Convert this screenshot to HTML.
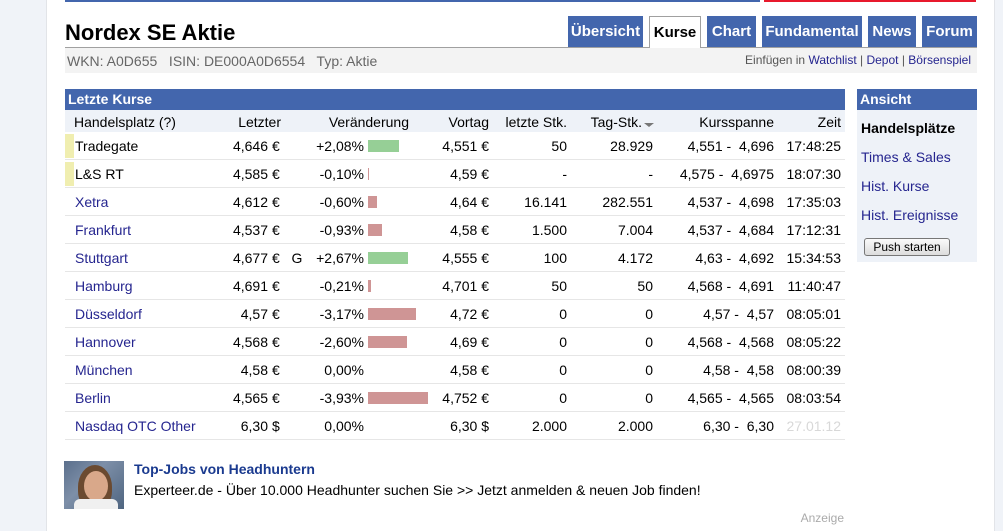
<!DOCTYPE html>
<html><head><meta charset="utf-8"><style>
*{margin:0;padding:0;box-sizing:border-box}
body{width:1003px;height:531px;overflow:hidden;background:#f0f3f8;font-family:"Liberation Sans",Arial,sans-serif;font-size:14px;color:#000;position:relative}
#page{position:absolute;left:46px;top:0;width:949px;height:531px;background:#fff;border-left:1px solid #e2e4e8;border-right:1px solid #e2e4e8}
.a{position:absolute;white-space:pre}
.r{position:absolute;white-space:pre;text-align:right}
.tab{position:absolute;top:16px;height:31px;background:#4366ad;color:#fff;font-weight:bold;font-size:15px;line-height:31px;text-align:center}
.row{position:absolute;left:65px;width:780px;height:28px;border-bottom:1px solid #e6e6e6}
.lnk{color:#25258f}
.bar{position:absolute;height:12px}
.g{background:#96cf96}.d{background:#cf9595}
</style></head><body>
<div id="page"></div>
<div class="a" style="left:65px;top:0;width:695px;height:2px;background:#4366ad"></div>
<div class="a" style="left:764px;top:0;width:212px;height:2px;background:#e8192c"></div>
<div class="a" style="left:65px;top:20px;font-size:22px;font-weight:bold">Nordex SE Aktie</div>
<div class="a" style="left:65px;top:47px;width:912px;height:1px;background:#a0a0a0"></div>
<div class="a" style="left:65px;top:48px;width:912px;height:25px;background:#f3f3f3"></div>
<div class="a" style="left:67px;top:53px;color:#666;font-size:14px">WKN: A0D655   ISIN: DE000A0D6554   Typ: Aktie</div>
<div class="r" style="right:32px;top:53px;font-size:12px;color:#555">Einfügen in <span class="lnk">Watchlist</span> | <span class="lnk">Depot</span> | <span class="lnk">Börsenspiel</span></div>
<div class="tab" style="left:568px;width:75px">Übersicht</div>
<div class="tab" style="left:649px;width:52px;top:16px;height:32px;background:#fff;color:#000;border:1px solid #a0a0a0;border-bottom:none">Kurse</div>
<div class="tab" style="left:707px;width:49px">Chart</div>
<div class="tab" style="left:762px;width:100px">Fundamental</div>
<div class="tab" style="left:868px;width:48px">News</div>
<div class="tab" style="left:922px;width:55px">Forum</div>

<div class="a" style="left:65px;top:89px;width:780px;height:21px;background:#4366ad;color:#fff;font-weight:bold;font-size:14px;line-height:21px;padding-left:3px">Letzte Kurse</div>
<div class="a" style="left:65px;top:110px;width:780px;height:22px;background:#eef2f8"></div>
<div class="a" style="left:74px;top:114px">Handelsplatz (?)</div>
<div class="r" style="right:722px;top:114px">Letzter</div>
<div class="r" style="right:594px;top:114px">Veränderung</div>
<div class="r" style="right:514px;top:114px">Vortag</div>
<div class="r" style="right:436px;top:114px">letzte Stk.</div>
<div class="r" style="right:361px;top:114px">Tag-Stk.</div>
<div class="a" style="left:644px;top:123px;width:0;height:0;border-left:5px solid transparent;border-right:5px solid transparent;border-top:4px solid #777"></div>
<div class="r" style="right:229px;top:114px">Kursspanne</div>
<div class="r" style="right:162px;top:114px">Zeit</div>

<div class="row" style="top:132px"></div><div class="a" style="left:65px;top:134px;width:9px;height:24px;background:#f0eeb0"></div>
<div class="a" style="left:75px;top:138px">Tradegate</div><div class="r" style="right:735px;top:138px">4,646</div><div class="a" style="left:272px;top:138px">€</div><div class="r" style="right:639px;top:138px">+2,08%</div><div class="bar g" style="left:368px;top:140px;width:31px"></div><div class="r" style="right:514px;top:138px">4,551 €</div><div class="r" style="right:436px;top:138px">50</div><div class="r" style="right:350px;top:138px">28.929</div><div class="r" style="right:229px;top:138px">4,551 -  4,696</div><div class="r" style="right:162px;top:138px">17:48:25</div>

<div class="row" style="top:160px"></div><div class="a" style="left:65px;top:162px;width:9px;height:24px;background:#f0eeb0"></div>
<div class="a" style="left:75px;top:166px">L&amp;S RT</div><div class="r" style="right:735px;top:166px">4,585</div><div class="a" style="left:272px;top:166px">€</div><div class="r" style="right:639px;top:166px">-0,10%</div><div class="bar d" style="left:368px;top:168px;width:1px"></div><div class="r" style="right:514px;top:166px">4,59 €</div><div class="r" style="right:436px;top:166px">-</div><div class="r" style="right:350px;top:166px">-</div><div class="r" style="right:229px;top:166px">4,575 -  4,6975</div><div class="r" style="right:162px;top:166px">18:07:30</div>

<div class="row" style="top:188px"></div>
<div class="a lnk" style="left:75px;top:194px">Xetra</div><div class="r" style="right:735px;top:194px">4,612</div><div class="a" style="left:272px;top:194px">€</div><div class="r" style="right:639px;top:194px">-0,60%</div><div class="bar d" style="left:368px;top:196px;width:9px"></div><div class="r" style="right:514px;top:194px">4,64 €</div><div class="r" style="right:436px;top:194px">16.141</div><div class="r" style="right:350px;top:194px">282.551</div><div class="r" style="right:229px;top:194px">4,537 -  4,698</div><div class="r" style="right:162px;top:194px">17:35:03</div>

<div class="row" style="top:216px"></div>
<div class="a lnk" style="left:75px;top:222px">Frankfurt</div><div class="r" style="right:735px;top:222px">4,537</div><div class="a" style="left:272px;top:222px">€</div><div class="r" style="right:639px;top:222px">-0,93%</div><div class="bar d" style="left:368px;top:224px;width:14px"></div><div class="r" style="right:514px;top:222px">4,58 €</div><div class="r" style="right:436px;top:222px">1.500</div><div class="r" style="right:350px;top:222px">7.004</div><div class="r" style="right:229px;top:222px">4,537 -  4,684</div><div class="r" style="right:162px;top:222px">17:12:31</div>

<div class="row" style="top:244px"></div>
<div class="a lnk" style="left:75px;top:250px">Stuttgart</div><div class="r" style="right:735px;top:250px">4,677</div><div class="a" style="left:272px;top:250px">€   G</div><div class="r" style="right:639px;top:250px">+2,67%</div><div class="bar g" style="left:368px;top:252px;width:40px"></div><div class="r" style="right:514px;top:250px">4,555 €</div><div class="r" style="right:436px;top:250px">100</div><div class="r" style="right:350px;top:250px">4.172</div><div class="r" style="right:229px;top:250px">4,63 -  4,692</div><div class="r" style="right:162px;top:250px">15:34:53</div>

<div class="row" style="top:272px"></div>
<div class="a lnk" style="left:75px;top:278px">Hamburg</div><div class="r" style="right:735px;top:278px">4,691</div><div class="a" style="left:272px;top:278px">€</div><div class="r" style="right:639px;top:278px">-0,21%</div><div class="bar d" style="left:368px;top:280px;width:3px"></div><div class="r" style="right:514px;top:278px">4,701 €</div><div class="r" style="right:436px;top:278px">50</div><div class="r" style="right:350px;top:278px">50</div><div class="r" style="right:229px;top:278px">4,568 -  4,691</div><div class="r" style="right:162px;top:278px">11:40:47</div>

<div class="row" style="top:300px"></div>
<div class="a lnk" style="left:75px;top:306px">Düsseldorf</div><div class="r" style="right:735px;top:306px">4,57</div><div class="a" style="left:272px;top:306px">€</div><div class="r" style="right:639px;top:306px">-3,17%</div><div class="bar d" style="left:368px;top:308px;width:48px"></div><div class="r" style="right:514px;top:306px">4,72 €</div><div class="r" style="right:436px;top:306px">0</div><div class="r" style="right:350px;top:306px">0</div><div class="r" style="right:229px;top:306px">4,57 -  4,57</div><div class="r" style="right:162px;top:306px">08:05:01</div>

<div class="row" style="top:328px"></div>
<div class="a lnk" style="left:75px;top:334px">Hannover</div><div class="r" style="right:735px;top:334px">4,568</div><div class="a" style="left:272px;top:334px">€</div><div class="r" style="right:639px;top:334px">-2,60%</div><div class="bar d" style="left:368px;top:336px;width:39px"></div><div class="r" style="right:514px;top:334px">4,69 €</div><div class="r" style="right:436px;top:334px">0</div><div class="r" style="right:350px;top:334px">0</div><div class="r" style="right:229px;top:334px">4,568 -  4,568</div><div class="r" style="right:162px;top:334px">08:05:22</div>

<div class="row" style="top:356px"></div>
<div class="a lnk" style="left:75px;top:362px">München</div><div class="r" style="right:735px;top:362px">4,58</div><div class="a" style="left:272px;top:362px">€</div><div class="r" style="right:639px;top:362px">0,00%</div><div class="r" style="right:514px;top:362px">4,58 €</div><div class="r" style="right:436px;top:362px">0</div><div class="r" style="right:350px;top:362px">0</div><div class="r" style="right:229px;top:362px">4,58 -  4,58</div><div class="r" style="right:162px;top:362px">08:00:39</div>

<div class="row" style="top:384px"></div>
<div class="a lnk" style="left:75px;top:390px">Berlin</div><div class="r" style="right:735px;top:390px">4,565</div><div class="a" style="left:272px;top:390px">€</div><div class="r" style="right:639px;top:390px">-3,93%</div><div class="bar d" style="left:368px;top:392px;width:60px"></div><div class="r" style="right:514px;top:390px">4,752 €</div><div class="r" style="right:436px;top:390px">0</div><div class="r" style="right:350px;top:390px">0</div><div class="r" style="right:229px;top:390px">4,565 -  4,565</div><div class="r" style="right:162px;top:390px">08:03:54</div>

<div class="row" style="top:412px"></div>
<div class="a lnk" style="left:75px;top:418px">Nasdaq OTC Other</div><div class="r" style="right:735px;top:418px">6,30</div><div class="a" style="left:272px;top:418px">$</div><div class="r" style="right:639px;top:418px">0,00%</div><div class="r" style="right:514px;top:418px">6,30 $</div><div class="r" style="right:436px;top:418px">2.000</div><div class="r" style="right:350px;top:418px">2.000</div><div class="r" style="right:229px;top:418px">6,30 -  6,30</div><div class="r" style="right:162px;top:418px;color:#d8d8d8">27.01.12</div>

<div class="a" style="left:64px;top:461px;width:60px;height:48px;background:linear-gradient(135deg,#5b6f8c,#7d8fa8 40%,#4f6580);overflow:hidden">
<div class="a" style="left:14px;top:4px;width:34px;height:44px;border-radius:50% 50% 40% 40%;background:#6b4a30"></div>
<div class="a" style="left:20px;top:10px;width:24px;height:30px;border-radius:50%;background:#d9a88a"></div>
<div class="a" style="left:10px;top:38px;width:44px;height:12px;background:#f0f0f0;border-radius:6px 6px 0 0"></div>
</div>
<div class="a" style="left:134px;top:461px;color:#1a3a8f;font-weight:bold">Top-Jobs von Headhuntern</div>
<div class="a" style="left:134px;top:482px">Experteer.de - Über 10.000 Headhunter suchen Sie &gt;&gt; Jetzt anmelden &amp; neuen Job finden!</div>
<div class="r" style="right:159px;top:511px;font-size:12px;color:#aaa">Anzeige</div>

<div class="a" style="left:857px;top:89px;width:120px;height:173px;background:#eef2f8"></div>
<div class="a" style="left:857px;top:89px;width:120px;height:21px;background:#4366ad;color:#fff;font-weight:bold;line-height:21px;padding-left:3px">Ansicht</div>
<div class="a" style="left:861px;top:120px;font-weight:bold">Handelsplätze</div>
<div class="a lnk" style="left:861px;top:149px">Times &amp; Sales</div>
<div class="a lnk" style="left:861px;top:178px">Hist. Kurse</div>
<div class="a lnk" style="left:861px;top:207px">Hist. Ereignisse</div>
<div class="a" style="left:864px;top:238px;width:86px;height:18px;border:1px solid #777;border-radius:3px;background:linear-gradient(#fafafa,#dcdcdc);font-size:12px;line-height:16px;text-align:center">Push starten</div>
</body></html>
